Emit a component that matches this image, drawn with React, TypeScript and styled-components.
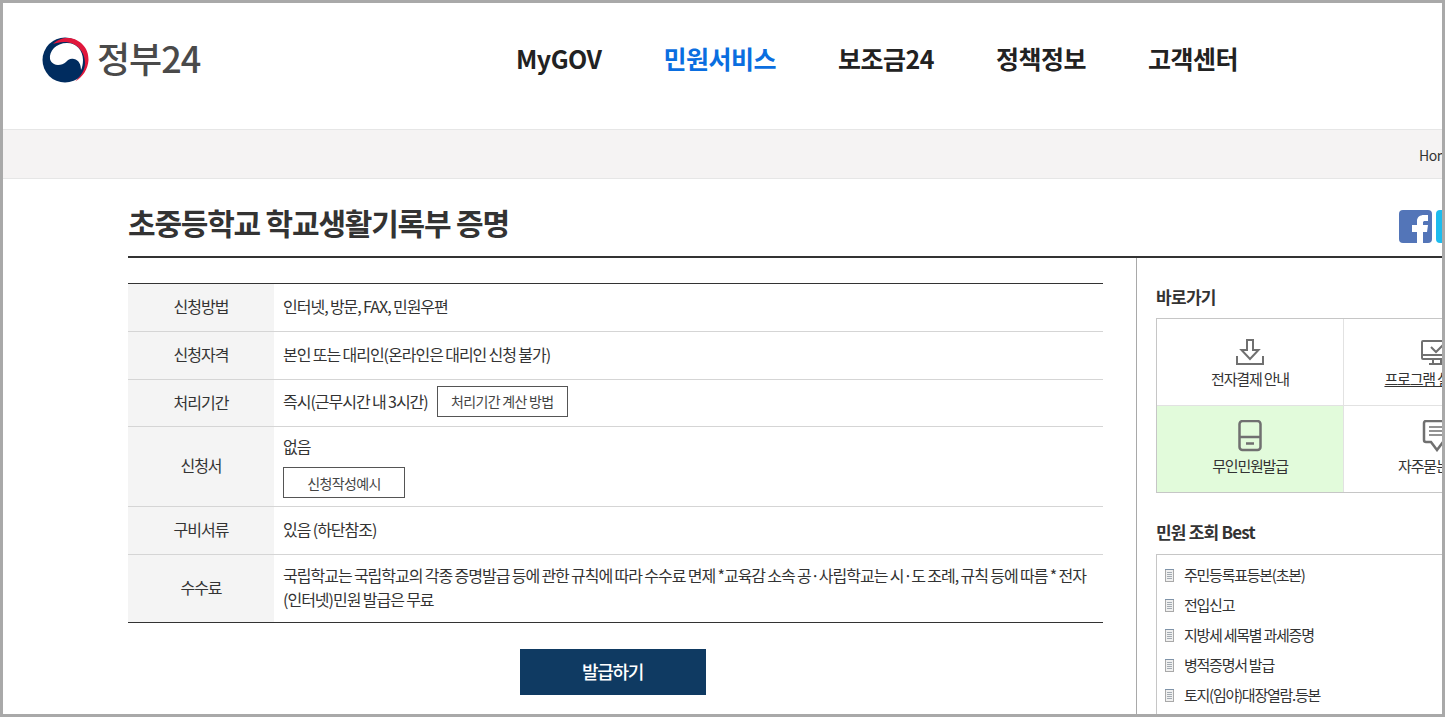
import React from 'react'
import styled, { createGlobalStyle } from 'styled-components'

const FONT = `"Noto Sans CJK KR", "Noto Sans", sans-serif`

const GlobalStyle = createGlobalStyle`
  html, body { margin: 0; padding: 0; height: 100%; overflow: hidden; background: #fff; }
  body { font-family: ${FONT}; color: #333; }
  * { box-sizing: border-box; }
`

const Logo = () => (
  <LogoWrap>
    <svg width="47" height="46" viewBox="0 0 47 46">
      <circle cx="23" cy="23" r="22.500" fill="#002c5f" />
      <path d="M11 7C16 2 22 0.500 27 1C38 2 47 11 46.500 23C46 32 41 40 33 44.500C39 39 43 33 43 26C43 15 35 5 22 5C18 5 14 6 11 7Z" fill="#e0173c" />
      <path d="M8 22C7 14 14 6 25 6C34 6 41 13 41 23C41 27 40 31 39 33C39 28 37 23 32 22C28 21 26 23 24 25C21 28 15 29 12 27C10 26 8.500 24 8 22Z" fill="#fff" />
    </svg>
    <LogoText>정부24</LogoText>
  </LogoWrap>
)

const menus = [
  { label: 'MyGOV' },
  { label: '민원서비스', active: true },
  { label: '보조금24' },
  { label: '정책정보' },
  { label: '고객센터' },
]

const getRows = () => [
  { h: 48, th: '신청방법', td: <>인터넷, 방문, FAX, 민원우편</> },
  { h: 48, th: '신청자격', td: <>본인 또는 대리인(온라인은 대리인 신청 불가)</> },
  {
    h: 47,
    th: '처리기간',
    td: (
      <InlineRow>
        즉시(근무시간 내 3시간)
        <OutlineButton $width={131}>처리기간 계산 방법</OutlineButton>
      </InlineRow>
    ),
  },
  {
    h: 80,
    th: '신청서',
    td: (
      <Stack>
        <span>없음</span>
        <OutlineButton $width={122}>신청작성예시</OutlineButton>
      </Stack>
    ),
  },
  { h: 48, th: '구비서류', td: <>있음 (하단참조)</> },
  {
    h: 67,
    th: '수수료',
    td: (
      <>
        국립학교는 국립학교의 각종 증명발급 등에 관한 규칙에 따라 수수료 면제 *교육감 소속 공·사립학교는 시·도 조례, 규칙 등에 따름 * 전자 (인터넷)민원 발급은 무료
      </>
    ),
  },
]

const best = ['주민등록표등본(초본)', '전입신고', '지방세 세목별 과세증명', '병적증명서 발급', '토지(임야)대장열람.등본']

const DownloadIcon = () => (
  <svg width="30" height="32" viewBox="0 0 30 32" fill="none" stroke="#707070" strokeWidth="2">
    <path d="M12 7h6v10h5.500L15 26 6.500 17H12z" />
    <path d="M2 23v8h26v-8" />
  </svg>
)
const MonitorIcon = () => (
  <svg width="32" height="32" viewBox="0 0 32 32" fill="none" stroke="#707070" strokeWidth="2">
    <rect x="1" y="8" width="30" height="18" rx="1" />
    <path d="M10 14l5 5 7-7M1 22h30M12 26v5M20 26v5M8 31h16" />
  </svg>
)
const KioskIcon = () => (
  <svg width="24" height="32" viewBox="0 0 24 32" fill="none" stroke="#707070" strokeWidth="2.500">
    <rect x="1.500" y="1" width="21" height="29" rx="3" />
    <path d="M1.500 17h21M8 23.500h8" />
  </svg>
)
const ChatIcon = () => (
  <svg width="32" height="32" viewBox="0 0 32 32" fill="none" stroke="#707070" strokeWidth="2.500">
    <path d="M5 1h22a2 2 0 0 1 2 2v17a2 2 0 0 1-2 2h-5l-6 8-6-8H5a2 2 0 0 1-2-2V3a2 2 0 0 1 2-2z" />
    <path d="M8 7h16M8 11h16M8 15h16" strokeWidth="1.500" />
  </svg>
)

const DocIcon = () => (
  <svg width="9" height="13" viewBox="0 0 9 13">
    <rect x="0.500" y="0.500" width="8" height="12" fill="#f0f0f0" stroke="#a9a9a9" />
    <path d="M0 0.500h9" stroke="#7f93a8" />
    <path d="M2 3.500h5M2 5.500h5M2 7.500h5M2 9.500h5" stroke="#a4acb3" />
  </svg>
)

export default function App() {
  return (
    <>
      <GlobalStyle />
      <Frame>
        <Header>
          <Logo />
          <Nav>
            {menus.map(m => (
              <NavItem key={m.label} $active={m.active}>
                {m.label}
              </NavItem>
            ))}
          </Nav>
        </Header>
        <Breadcrumb>
          <BreadcrumbText>Home</BreadcrumbText>
        </Breadcrumb>
        <Content>
          <TitleRow>
            <Title>초중등학교 학교생활기록부 증명</Title>
            <Social>
              <Facebook>
                <svg width="33" height="33" viewBox="0 0 33 33">
                  <path d="M18 33V22h-5v-7h5v-4c0-4 3-6 7-6h4v6h-3c-1.500 0-2 .5-2 2v2h5l-1 7h-4v11z" fill="#fff" />
                </svg>
              </Facebook>
              <Twitter />
            </Social>
          </TitleRow>
          <Columns>
            <Main>
              <InfoTable>
                {getRows().map(r => (
                  <InfoRow key={r.th} $h={r.h}>
                    <InfoHead>{r.th}</InfoHead>
                    <InfoCell>{r.td}</InfoCell>
                  </InfoRow>
                ))}
              </InfoTable>
              <IssueButton>발급하기</IssueButton>
            </Main>
            <Aside>
              <AsideTitle>바로가기</AsideTitle>
              <QuickGrid>
                <QuickCell>
                  <DownloadIcon />
                  <QuickLabel>전자결제 안내</QuickLabel>
                </QuickCell>
                <QuickCell>
                  <MonitorIcon />
                  <QuickLabel $underline>프로그램 설치 안내</QuickLabel>
                </QuickCell>
                <QuickCell $green>
                  <KioskIcon />
                  <QuickLabel>무인민원발급</QuickLabel>
                </QuickCell>
                <QuickCell>
                  <ChatIcon />
                  <QuickLabel>자주묻는 질문</QuickLabel>
                </QuickCell>
              </QuickGrid>
              <BestTitle>민원 조회 Best</BestTitle>
              <BestBox>
                {best.map(b => (
                  <BestItem key={b}>
                    <DocIcon />
                    {b}
                  </BestItem>
                ))}
              </BestBox>
            </Aside>
          </Columns>
        </Content>
      </Frame>
    </>
  )
}

const Frame = styled.div`
  width: 1445px;
  height: 717px;
  border: 3px solid #a9a9a9;
  overflow: hidden;
  background: #fff;
`

const Header = styled.header`
  height: 126px;
  display: flex;
  align-items: flex-start;
  padding: 34px 0 0 39px;
`

const LogoWrap = styled.div`
  display: flex;
  align-items: center;
  gap: 8px;
  width: 474px;
`

const LogoText = styled.span`
  font-size: 36px;
  font-weight: 500;
  letter-spacing: -1px;
  color: #4a4a4a;
  line-height: 38px;
  padding-bottom: 6px;
`

const Nav = styled.nav`
  display: flex;
  gap: 62px;
  padding-top: 3px;
`

const NavItem = styled.a<{ $active?: boolean }>`
  font-size: 25px;
  font-weight: 700;
  line-height: 36px;
  letter-spacing: -0.500px;
  color: ${p => (p.$active ? '#0a6ee0' : '#222')};
`

const Breadcrumb = styled.div`
  height: 50px;
  background: #f5f3f3;
  border-top: 1px solid #e6e6e6;
  border-bottom: 1px solid #e6e6e6;
  display: flex;
  padding: 15px 0 0 1416px;
  overflow: hidden;
`

const BreadcrumbText = styled.span`
  font-size: 14px;
  line-height: 20px;
  letter-spacing: -0.500px;
  color: #333;
`

const Content = styled.main`
  padding-left: 125px;
  width: 1439px;
`

const TitleRow = styled.div`
  height: 79px;
  width: 1400px;
  border-bottom: 2px solid #333;
  display: flex;
  justify-content: space-between;
  padding-top: 24px;
`

const Title = styled.h1`
  margin: 0;
  font-size: 30px;
  font-weight: 700;
  line-height: 38px;
  letter-spacing: -1.200px;
  color: #333;
`

const Social = styled.div`
  display: flex;
  gap: 4px;
  width: 129px;
  padding-top: 7px;
`

const Facebook = styled.div`
  width: 33px;
  height: 33px;
  border-radius: 4px;
  background: #5375b8;
  overflow: hidden;
`

const Twitter = styled.div`
  width: 33px;
  height: 33px;
  border-radius: 4px;
  background: #1dbcee;
`

const Columns = styled.div`
  display: flex;
`

const Main = styled.div`
  width: 1009px;
  border-right: 1px solid #a9a9a9;
  padding: 25px 33px 0 0;
  height: 460px;
  display: flex;
  flex-direction: column;
  align-items: center;
`

const InfoTable = styled.div`
  width: 975px;
  border-top: 1px solid #333;
  border-bottom: 1px solid #333;
`

const InfoRow = styled.div<{ $h: number }>`
  display: grid;
  grid-template-columns: 146px 1fr;
  height: ${p => p.$h}px;
  border-bottom: 1px solid #d5d5d5;

  &:last-child {
    border-bottom: none;
  }
`

const InfoHead = styled.div`
  background: #f4f4f4;
  display: flex;
  align-items: center;
  justify-content: center;
  padding-bottom: 3px;
  font-size: 16px;
  letter-spacing: -1px;
  color: #333;
`

const InfoCell = styled.div`
  padding: 0 9px 3px;
  align-self: center;
  font-size: 16px;
  line-height: 24px;
  letter-spacing: -1px;
  word-spacing: -0.300px;
  color: #333;
`

const InlineRow = styled.div`
  display: flex;
  align-items: center;
  gap: 9px;
  margin-bottom: 1px;
`

const Stack = styled.div`
  display: flex;
  flex-direction: column;
  gap: 9px;
  padding-top: 2px;
  align-items: flex-start;
`

const OutlineButton = styled.span<{ $width: number }>`
  display: inline-flex;
  align-items: center;
  justify-content: center;
  width: ${p => p.$width}px;
  height: 31px;
  border: 1px solid #555;
  font-size: 14px;
  letter-spacing: -0.600px;
  color: #444;
`

const IssueButton = styled.button`
  margin-top: 26px;
  margin-right: 6px;
  width: 186px;
  height: 46px;
  padding: 0 0 3px;
  background: #0f3a62;
  border: none;
  color: #fff;
  font-family: ${FONT};
  font-size: 18px;
  font-weight: 500;
  letter-spacing: -1.300px;
`

const Aside = styled.aside`
  width: 400px;
  padding: 27px 0 0 19px;
`

const AsideTitle = styled.h2`
  margin: 0 0 9px;
  font-size: 17px;
  font-weight: 700;
  line-height: 24px;
  letter-spacing: -0.700px;
  color: #333;
`

const QuickGrid = styled.div`
  display: grid;
  grid-template-columns: 187px 187px;
  grid-template-rows: 87px 86px;
  width: 375px;
  border: 1px solid #c6c6c6;
`

const QuickCell = styled.div<{ $green?: boolean }>`
  display: flex;
  flex-direction: column;
  align-items: center;
  justify-content: flex-start;
  padding-top: 14px;
  gap: 4px;
  background: ${p => (p.$green ? '#e2fbdb' : '#fff')};
  border-right: 1px solid #e2e2e2;
  border-bottom: 1px solid #e2e2e2;

  &:nth-child(n + 3) {
    border-bottom: none;
  }
`

const QuickLabel = styled.span<{ $underline?: boolean }>`
  font-size: 15px;
  line-height: 20px;
  letter-spacing: -1.200px;
  color: #333;
  text-decoration: ${p => (p.$underline ? 'underline' : 'none')};
`

const BestTitle = styled.h2`
  margin: 27px 0 10px;
  font-size: 17px;
  font-weight: 700;
  line-height: 24px;
  letter-spacing: -0.800px;
  color: #333;
`

const BestBox = styled.ul`
  margin: 0;
  width: 375px;
  height: 170px;
  list-style: none;
  border: 1px solid #c6c6c6;
  padding: 4px 0 0 8px;
`

const BestItem = styled.li`
  display: flex;
  align-items: center;
  gap: 10px;
  height: 30px;
  font-size: 15px;
  letter-spacing: -1.250px;
  color: #333;

  svg {
    margin-top: 3px;
  }
`
